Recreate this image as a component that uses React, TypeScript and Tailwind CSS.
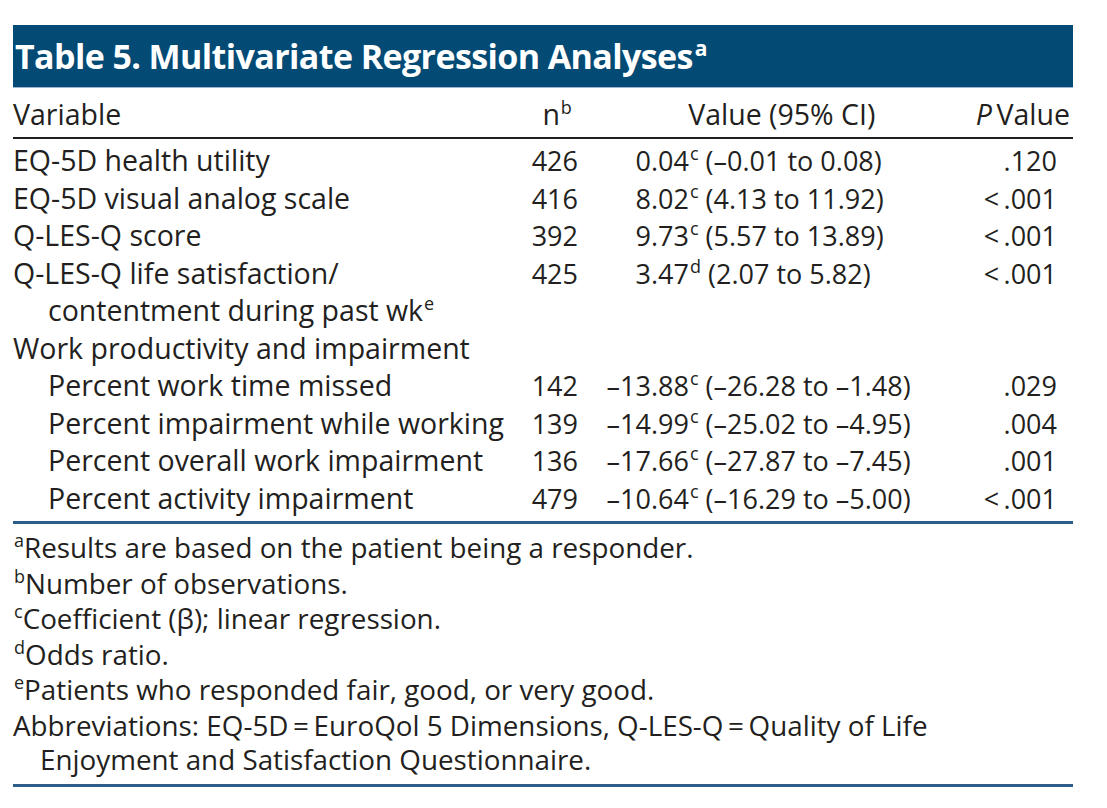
import React from "react";

const F = { fontFamily: '"Open Sans", "Noto Sans", sans-serif' };

function Sup({ c }: { c: string }) {
  return <sup className="text-[18px] -top-[11px] leading-none ml-[1px]">{c}</sup>;
}

type Row = {
  label: React.ReactNode;
  indent?: boolean;
  n?: string;
  int?: string;
  rest?: string;
  sup?: string;
  ci?: string;
  p?: string;
  second?: React.ReactNode;
};

const rows: Row[] = [
  { label: "EQ-5D health utility", n: "426", int: "0", rest: ".04", sup: "c", ci: " (–0.01 to 0.08)", p: ".120" },
  { label: "EQ-5D visual analog scale", n: "416", int: "8", rest: ".02", sup: "c", ci: " (4.13 to 11.92)", p: "<\u2009.001" },
  { label: "Q-LES-Q score", n: "392", int: "9", rest: ".73", sup: "c", ci: " (5.57 to 13.89)", p: "<\u2009.001" },
  {
    label: "Q-LES-Q life satisfaction/",
    n: "425",
    int: "3",
    rest: ".47",
    sup: "d",
    ci: " (2.07 to 5.82)",
    p: "<\u2009.001",
    second: (
      <>
        contentment during past wk<Sup c="e" />
      </>
    ),
  },
  { label: "Work productivity and impairment" },
  { label: "Percent work time missed", indent: true, n: "142", int: "–13", rest: ".88", sup: "c", ci: " (–26.28 to –1.48)", p: ".029" },
  { label: "Percent impairment while working", indent: true, n: "139", int: "–14", rest: ".99", sup: "c", ci: " (–25.02 to –4.95)", p: ".004" },
  { label: "Percent overall work impairment", indent: true, n: "136", int: "–17", rest: ".66", sup: "c", ci: " (–27.87 to –7.45)", p: ".001" },
  { label: "Percent activity impairment", indent: true, n: "479", int: "–10", rest: ".64", sup: "c", ci: " (–16.29 to –5.00)", p: "<\u2009.001" },
];

export default function App() {
  return (
    <div className="w-[1107px] h-[808px] bg-white text-[#231f20]" style={F}>
      <div className="pt-[25px] pl-[13px] w-[1073px]">
        {/* Title banner */}
        <div className="bg-[#034a75] h-[63px] border-b border-[#9bb6cf] flex items-center pl-[2px]">
          <span className="text-white font-bold text-[34px] tracking-[-0.6px] leading-none whitespace-nowrap">
            Table 5. Multivariate Regression Analyses
            <sup className="text-[21px] -top-[13px] leading-none ml-[2px]">a</sup>
          </span>
        </div>

        {/* Column headers */}
        <div className="flex items-end h-[51px] pb-[8px] border-b-2 border-[#231f20] text-[28.5px] leading-[30px] whitespace-nowrap">
          <div className="w-[500px]">Variable</div>
          <div className="w-[65px] text-right">
            n<Sup c="b" />
          </div>
          <div className="w-[408px] text-center pl-[16px]">Value (95% CI)</div>
          <div className="flex-1 text-right pr-[3px]">
            <span className="italic">P</span>&thinsp;Value
          </div>
        </div>

        {/* Body */}
        <div className="pt-[3px] pb-[4px] border-b-[3px] border-[#2c5d8a] text-[28.5px] leading-[37.5px] whitespace-nowrap">
          {rows.map((r, i) => (
            <div key={i}>
              <div className="flex">
                <div className={"w-[500px] " + (r.indent ? "pl-[35px]" : "")}>{r.label}</div>
                <div className="w-[65px] text-right text-[27px]">{r.n}</div>
                <div className="w-[400px] flex text-[27px]">
                  {r.int !== undefined && (
                    <>
                      <span className="w-[73px] text-right">{r.int}</span>
                      <span className="whitespace-pre">
                        {r.rest}
                        <Sup c={r.sup || ""} />
                        {r.ci}
                      </span>
                    </>
                  )}
                </div>
                <div className="flex-1 text-right pr-[16px] whitespace-pre text-[27px]">{r.p}</div>
              </div>
              {r.second && <div className="pl-[35px]">{r.second}</div>}
            </div>
          ))}
        </div>

        {/* Footnotes */}
        <div className="pt-[6px] pb-[8px] border-b-[3px] border-[#2c5d8a] text-[27.8px] leading-[35.5px] whitespace-nowrap">
          <div>
            <Sup c="a" />Results are based on the patient being a responder.
          </div>
          <div>
            <Sup c="b" />Number of observations.
          </div>
          <div>
            <Sup c="c" />Coefficient (β); linear regression.
          </div>
          <div>
            <Sup c="d" />Odds ratio.
          </div>
          <div>
            <Sup c="e" />Patients who responded fair, good, or very good.
          </div>
          <div>Abbreviations: EQ-5D&thinsp;=&thinsp;EuroQol 5 Dimensions, Q-LES-Q&thinsp;=&thinsp;Quality of Life</div>
          <div className="pl-[27px] leading-[33px]">Enjoyment and Satisfaction Questionnaire.</div>
        </div>
      </div>
    </div>
  );
}
